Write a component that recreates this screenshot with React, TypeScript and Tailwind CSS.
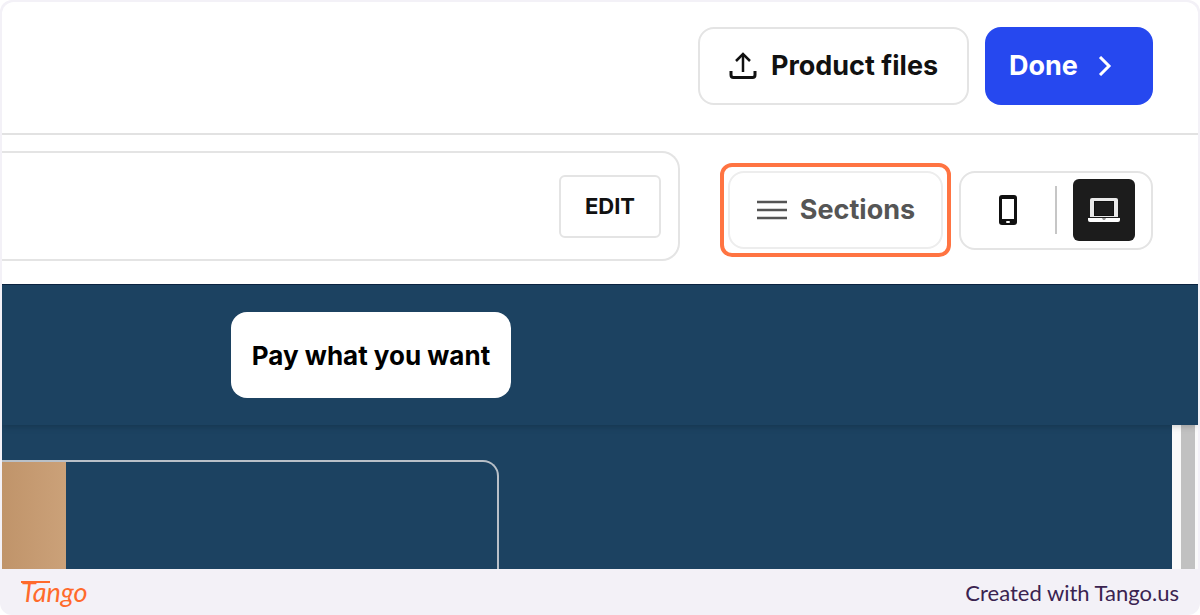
import type { ReactNode } from "react";

function UploadIcon() {
  return (
    <svg width="28" height="28" viewBox="0 0 28 28" fill="none" stroke="currentColor" aria-hidden="true">
      <path d="M14 20V3" strokeWidth="2.5" />
      <path d="M7 9l7-7 7 7" strokeWidth="2.5" />
      <path d="M2 19v4q0 2.5 2.5 2.5h19q2.5 0 2.5-2.5v-4" strokeWidth="3" />
    </svg>
  );
}

function ChevronIcon() {
  return (
    <svg width="14" height="20" viewBox="0 0 14 20" fill="none" stroke="currentColor" aria-hidden="true">
      <path d="M2 1l9 9-9 9" strokeWidth="3" />
    </svg>
  );
}

function MenuIcon() {
  return (
    <svg width="32" height="20" viewBox="0 0 32 20" fill="none" stroke="currentColor" aria-hidden="true">
      <path d="M1 2h30M1 10h30M1 18h30" strokeWidth="2.5" />
    </svg>
  );
}

function PhoneIcon() {
  return (
    <svg width="18" height="30" viewBox="0 0 18 30" aria-hidden="true">
      <rect x="0" y="0" width="18" height="30" rx="3" fill="#111" />
      <rect x="3" y="4" width="12" height="20" fill="#fff" />
      <rect x="7" y="26" width="4" height="2" rx="1" fill="#fff" />
    </svg>
  );
}

function LaptopIcon() {
  return (
    <svg width="34" height="26" viewBox="0 0 34 26" aria-hidden="true">
      <path d="M3 20V3q0-2 2-2h24q2 0 2 2v17z" fill="#e9e9e9" />
      <rect x="7" y="4" width="20" height="15" fill="#111" />
      <rect x="8" y="5" width="18" height="13" fill="#1c1c1c" />
      <path d="M1 21h32v2q0 2-2 2H3q-2 0-2-2z" fill="#fff" />
      <path d="M15 21h4l-1 2h-2z" fill="#999" />
    </svg>
  );
}

function OutlineButton({ children, className }: { children: ReactNode; className: string }) {
  return (
    <button
      type="button"
      className={`flex shrink-0 items-center justify-center border-2 bg-white font-bold ${className}`}
    >
      {children}
    </button>
  );
}

function Header() {
  return (
    <header className="flex justify-end gap-4 border-b-2 border-[#e2e2e2] pt-[25px] pr-[45px] pb-7">
      <OutlineButton className="h-[78px] w-[271px] gap-[14px] rounded-2xl border-[#e4e4e4] text-[27px] text-[#111]">
        <UploadIcon />
        Product files
      </OutlineButton>
      <button
        type="button"
        className="flex h-[78px] w-[168px] items-center gap-5 rounded-2xl bg-[#2648ef] pl-6 text-[27px] font-bold text-white"
      >
        Done
        <ChevronIcon />
      </button>
    </header>
  );
}

function Toolbar() {
  return (
    <div className="flex items-center pt-4 pr-[45px] pb-[23px]">
      <div className="flex h-[110px] flex-1 items-center justify-end rounded-r-[18px] border-2 border-l-0 border-[#e4e4e4] pr-[17px]">
        <OutlineButton className="h-[63px] w-[102px] rounded-md border-[#e4e4e4] text-[22px] text-[#111]">
          EDIT
        </OutlineButton>
      </div>
      <div className="ml-10 flex items-center gap-2 pt-2">
        <div className="rounded-xl border-4 border-[#ff7442] p-1">
          <OutlineButton className="h-[78px] w-[215px] gap-3 rounded-2xl border-[#ededed] text-[27px] text-[#555]">
            <MenuIcon />
            Sections
          </OutlineButton>
        </div>
        <div className="flex h-[79px] w-[194px] items-center rounded-2xl border-2 border-[#e4e4e4] pr-4">
          <button type="button" aria-label="Mobile preview" className="flex h-[62px] flex-1 items-center justify-center">
            <PhoneIcon />
          </button>
          <span className="mr-4 h-12 w-0.5 bg-[#c6c6c6]" />
          <button
            type="button"
            aria-label="Desktop preview"
            className="flex size-[62px] items-center justify-center rounded-md bg-[#1c1c1c]"
          >
            <LaptopIcon />
          </button>
        </div>
      </div>
    </div>
  );
}

function Preview() {
  return (
    <main className="bg-[#1c4261]">
      <div className="relative border-t border-[#0b2340] pt-[27px] pb-[27px] pl-[229px] shadow-md">
        <button
          type="button"
          className="h-[86px] w-[280px] rounded-2xl bg-white text-[26px] font-bold text-black"
        >
          Pay what you want
        </button>
      </div>
      <div className="flex h-36 justify-between overflow-hidden">
        <div className="mt-[35px] flex w-[497px] rounded-tr-2xl border-t-2 border-r-2 border-[#b9c0c8]">
          <div className="w-16 bg-linear-to-r from-[#c0946a] to-[#cba179]" />
        </div>
        <div className="flex w-[26px] justify-end bg-[#fafafa] pr-[3px]">
          <div className="w-[14px] bg-[#c1c1c1]" />
        </div>
      </div>
    </main>
  );
}

function TangoLogo() {
  return (
    <span className="relative font-['Lato',cursive] text-[27px] leading-9 text-[#ff6a2b] italic">
      Tango
      <span className="absolute top-[7px] left-0 h-0.5 w-[29px] bg-[#ff6a2b]" />
    </span>
  );
}

export default function App() {
  return (
    <div className="overflow-hidden rounded-xl bg-[#f3f1f7] font-['Inter',sans-serif]">
      <div className="mx-0.5 overflow-hidden rounded-t-xl pt-0.5">
        <div className="rounded-t-xl bg-white">
          <Header />
          <Toolbar />
        </div>
        <Preview />
      </div>
      <footer className="flex h-[46px] items-center justify-between px-[21px]">
        <TangoLogo />
        <span className="font-['Lato',sans-serif] text-[22px] text-[#3a2350]">Created with Tango.us</span>
      </footer>
    </div>
  );
}
